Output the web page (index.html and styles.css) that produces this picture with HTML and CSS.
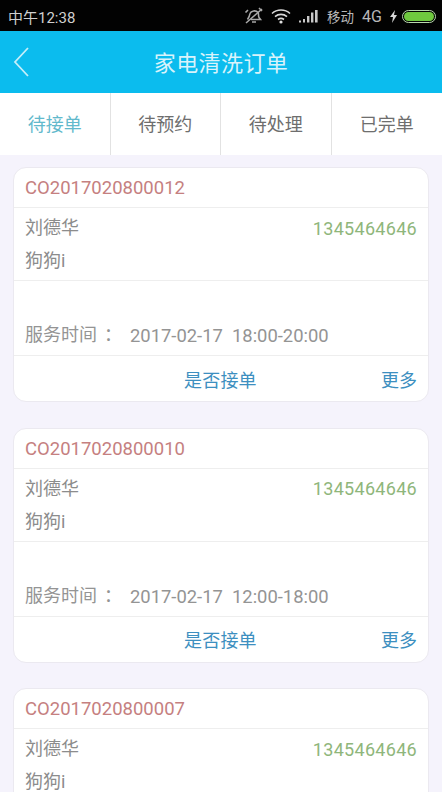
FILE: index.html
```html
<!DOCTYPE html>
<html lang="zh">
<head>
<meta charset="utf-8">
<title>家电清洗订单</title>
<link rel="stylesheet" href="styles.css">
</head>
<body>
<div class="phone">
  <div class="status">
    <span class="clock">中午12:38</span>
    <div class="status-right">
      <svg class="ic-alarm" width="20" height="18" viewBox="0 0 20 18"><g fill="none" stroke="#a8a8a8" stroke-width="1.6"><path d="M6 6.500c1-3 6-3.500 8-1 1 1.500 0 3 1 5l1.500 2H7M6 6.500c-.3 2-.8 3.500-2.500 6M8 15h4"/><path d="M2 16 18 2M4 3 1.500 5.500M15 1l3 3"/></g></svg>
      <svg class="ic-wifi" width="20" height="16" viewBox="0 0 20 16"><g fill="none" stroke="#d8d8d8" stroke-width="1.6"><path d="M1 5.500c5-4.600 13-4.600 18 0M4 8.600c3.500-3 8.500-3 12 0M7 11.500c1.800-1.300 4.200-1.300 6 0"/></g><circle cx="10" cy="14" r="1.600" fill="#e0e0e0"/></svg>
      <svg class="ic-signal" width="20" height="14" viewBox="0 0 20 14"><g fill="#c8c8c8"><rect x="0" y="11.500" width="2" height="2"/><rect x="4" y="10" width="2" height="3.500"/><rect x="8" y="7" width="2.400" height="6.500"/><rect x="12" y="3.500" width="2.400" height="10"/><rect x="16" y="1" width="2.600" height="12.500"/></g></svg>
      <span class="carrier">移动</span>
      <span class="net">4G</span>
      <svg class="ic-bolt" width="7" height="13" viewBox="0 0 7 13"><path d="M5 0 0 7h3l-1 6 5-8H4z" fill="#d8d8d8"/></svg>
      <span class="battery"><span class="battery-fill"></span></span>
    </div>
  </div>

  <header class="appbar">
    <svg class="back" width="16" height="32" viewBox="0 0 16 32"><path d="M15 2 2 16l13 14" fill="none" stroke="#c5eef9" stroke-width="1.800"/></svg>
    <h1 class="title">家电清洗订单</h1>
  </header>

  <nav class="tabs">
    <div class="tab active">待接单</div>
    <div class="tab">待预约</div>
    <div class="tab">待处理</div>
    <div class="tab">已完单</div>
  </nav>

  <main class="list">
    <article class="card">
      <div class="order">CO2017020800012</div>
      <div class="info">
        <div class="line"><span>刘德华</span><span class="phone-no">1345464646</span></div>
        <div class="pet">狗狗i</div>
      </div>
      <div class="time"><span class="time-label">服务时间<span class="colon">：</span></span><span>2017-02-17&nbsp; 18:00-20:00</span></div>
      <div class="actions"><span class="accept">是否接单</span><span class="more">更多</span></div>
    </article>
    <article class="card">
      <div class="order">CO2017020800010</div>
      <div class="info">
        <div class="line"><span>刘德华</span><span class="phone-no">1345464646</span></div>
        <div class="pet">狗狗i</div>
      </div>
      <div class="time"><span class="time-label">服务时间<span class="colon">：</span></span><span>2017-02-17&nbsp; 12:00-18:00</span></div>
      <div class="actions"><span class="accept">是否接单</span><span class="more">更多</span></div>
    </article>
    <article class="card">
      <div class="order">CO2017020800007</div>
      <div class="info">
        <div class="line"><span>刘德华</span><span class="phone-no">1345464646</span></div>
        <div class="pet">狗狗i</div>
      </div>
    </article>
  </main>
</div>
</body>
</html>
```

FILE: styles.css
```css
* { box-sizing: border-box; }
html, body { margin: 0; padding: 0; }
body {
  font-family: "Roboto", "Noto Sans CJK SC", sans-serif;
  background: #f5f3fc;
}
.phone {
  width: 442px;
  height: 792px;
  overflow: hidden;
  display: flex;
  flex-direction: column;
  background: #f5f3fc;
}
.status {
  height: 31px;
  flex: none;
  background: #020202;
  display: flex;
  align-items: center;
  justify-content: space-between;
  padding: 1px 6px 0 8px;
  color: #cfcfcf;
}
.clock { font-size: 15px; }
.status-right { display: flex; align-items: center; }
.ic-alarm { margin-right: 7px; }
.ic-wifi { margin-right: 8px; }
.ic-signal { margin-right: 8px; }
.carrier { font-size: 13.500px; margin-right: 8px; color: #b8b8b8; }
.net { font-size: 16px; margin-right: 8px; color: #b8b8b8; }
.ic-bolt { margin-right: 5px; }
.battery {
  width: 34px;
  height: 13px;
  border: 1px solid #b9d9ae;
  border-radius: 7px;
  padding: 1px;
  display: block;
}
.battery-fill {
  display: block;
  height: 100%;
  border-radius: 5px;
  background: #6fc93f;
}
.appbar {
  height: 62px;
  flex: none;
  background: #0bbcee;
  display: flex;
  align-items: center;
  justify-content: center;
  position: relative;
  padding-bottom: 2px;
}
.back { position: absolute; left: 13px; top: 15px; }
.title {
  margin: 0;
  font-size: 22px;
  font-weight: 400;
  letter-spacing: 0.4px;
  color: #d8f3fb;
}
.tabs {
  height: 62px;
  flex: none;
  background: #fff;
  display: grid;
  grid-template-columns: repeat(4, 1fr);
}
.tab {
  display: flex;
  align-items: center;
  justify-content: center;
  font-size: 18px;
  color: #6e6e6e;
  border-right: 1px solid #e2e2e2;
  padding-bottom: 2px;
}
.tab:last-child { border-right: 0; }
.tab.active { color: #62b9cc; }
.list {
  flex: 1;
  min-height: 0;
  padding: 12px 13px 0 13px;
  display: flex;
  flex-direction: column;
  gap: 25.500px;
}
.card {
  flex: none;
  height: 235px;
  background: #fff;
  border: 1px solid #ebe9f0;
  border-radius: 13px;
  display: flex;
  flex-direction: column;
}
.order {
  height: 40px;
  flex: none;
  padding: 1px 11px 0;
  display: flex;
  align-items: center;
  font-size: 18.500px;
  color: #c58080;
  border-bottom: 1px solid #eeeeee;
}
.info {
  height: 73px;
  flex: none;
  padding: 1px 11px 0;
  font-size: 18px;
  color: #8c8c8c;
  border-bottom: 1px solid #eeeeee;
}
.line {
  height: 34px;
  display: flex;
  align-items: center;
  justify-content: space-between;
}
.phone-no { font-size: 18px; color: #8fb67b; letter-spacing: 0.3px; padding-top: 4px; }
.pet { height: 32px; display: flex; align-items: center; }
.time {
  height: 75px;
  flex: none;
  padding: 0 11px 9px;
  display: flex;
  align-items: flex-end;
  font-size: 18.400px;
  color: #949494;
  border-bottom: 1px solid #eeeeee;
}
.time-label { width: 105px; flex: none; font-size: 18px; white-space: nowrap; }
.colon { margin-left: 7px; }
.actions {
  flex: 1;
  padding: 0 11px 0 0;
  display: flex;
  align-items: center;
  position: relative;
  justify-content: flex-end;
  font-size: 18px;
  color: #3d8fc0;
}
.accept { position: absolute; left: 170px; letter-spacing: 0.2px; }
```
